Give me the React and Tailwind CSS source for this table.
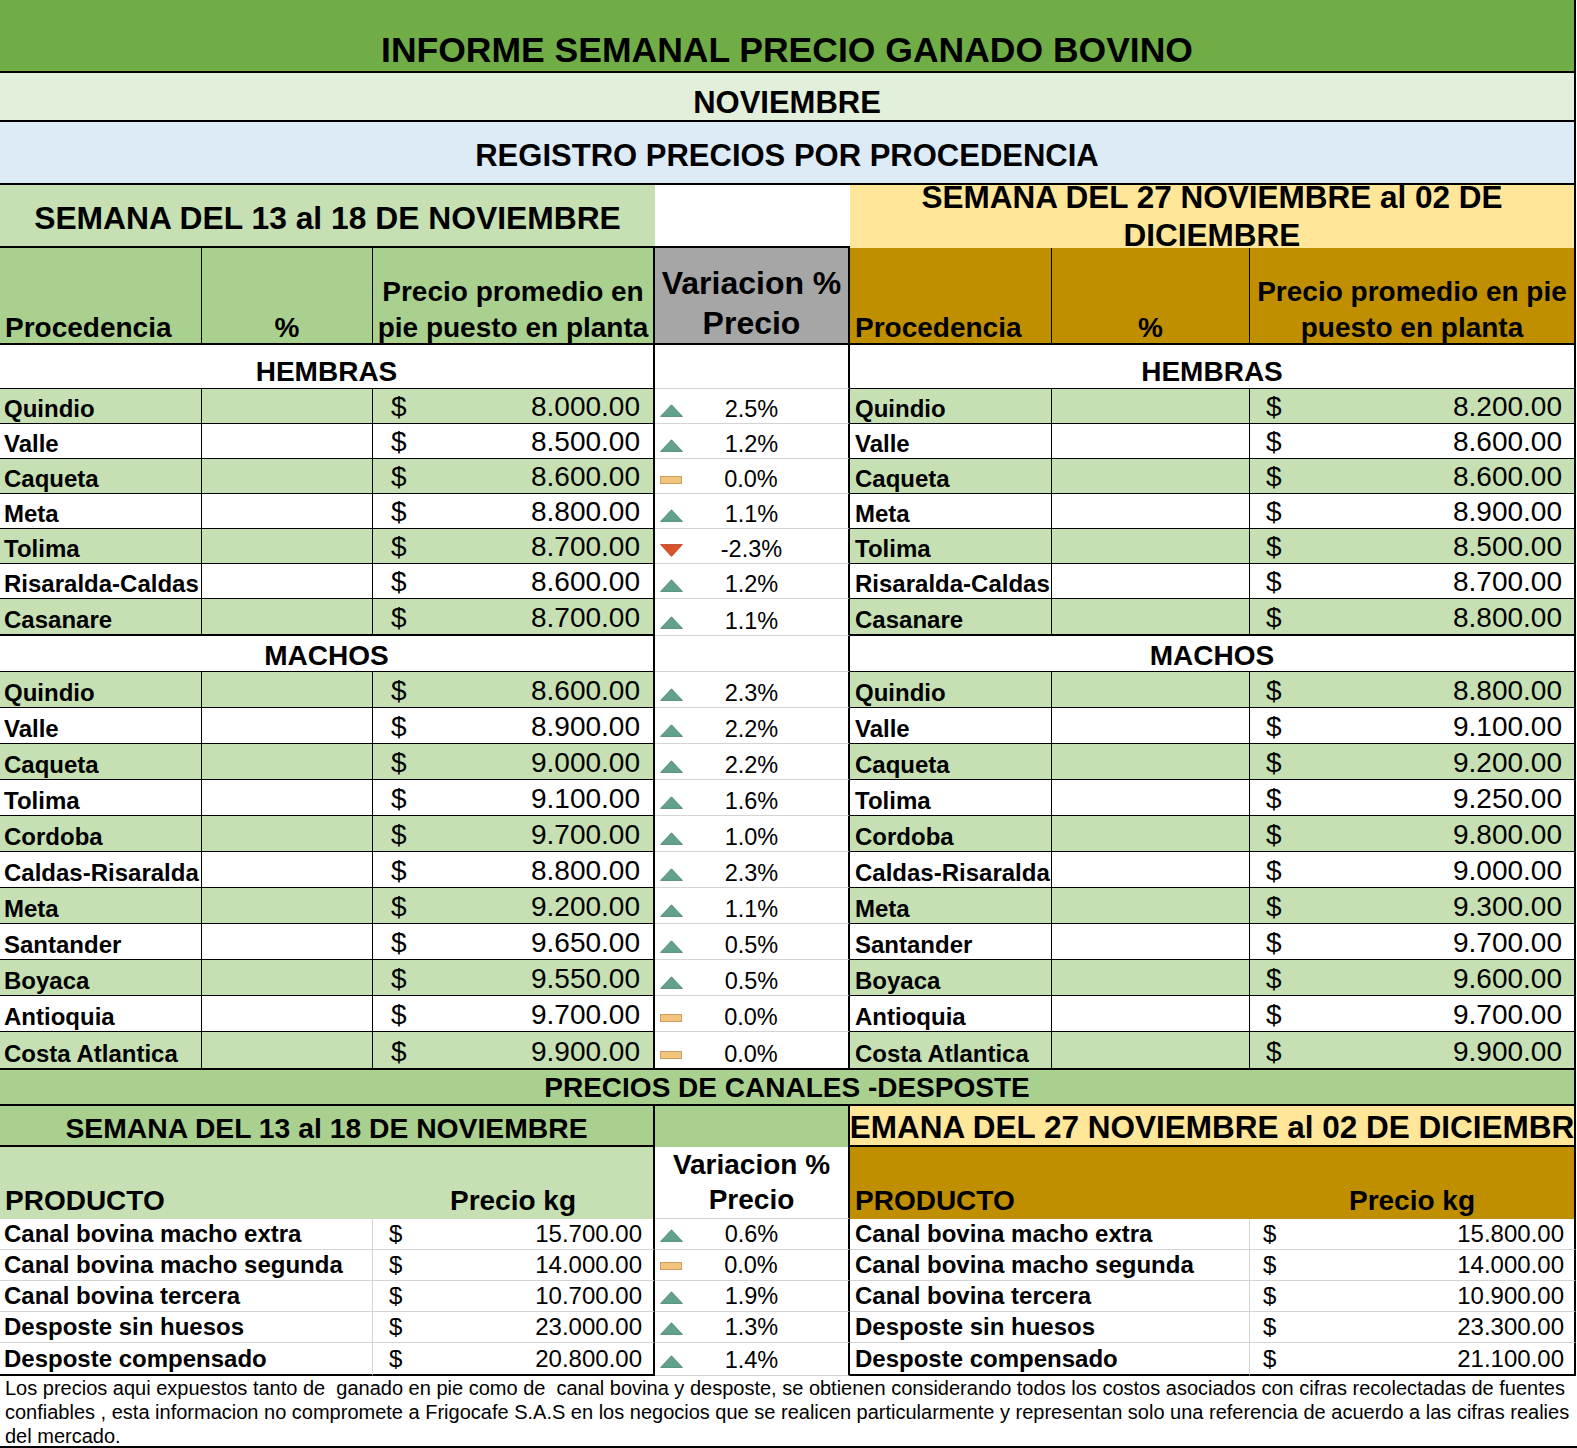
import React from "react";

const FONT = "font-['Liberation_Sans',Arial,Helvetica,sans-serif]";

const hembras = [
  ["Quindio", "8.000.00", "up", "2.5%", "8.200.00"],
  ["Valle", "8.500.00", "up", "1.2%", "8.600.00"],
  ["Caqueta", "8.600.00", "flat", "0.0%", "8.600.00"],
  ["Meta", "8.800.00", "up", "1.1%", "8.900.00"],
  ["Tolima", "8.700.00", "down", "-2.3%", "8.500.00"],
  ["Risaralda-Caldas", "8.600.00", "up", "1.2%", "8.700.00"],
  ["Casanare", "8.700.00", "up", "1.1%", "8.800.00"],
];

const machos = [
  ["Quindio", "8.600.00", "up", "2.3%", "8.800.00"],
  ["Valle", "8.900.00", "up", "2.2%", "9.100.00"],
  ["Caqueta", "9.000.00", "up", "2.2%", "9.200.00"],
  ["Tolima", "9.100.00", "up", "1.6%", "9.250.00"],
  ["Cordoba", "9.700.00", "up", "1.0%", "9.800.00"],
  ["Caldas-Risaralda", "8.800.00", "up", "2.3%", "9.000.00"],
  ["Meta", "9.200.00", "up", "1.1%", "9.300.00"],
  ["Santander", "9.650.00", "up", "0.5%", "9.700.00"],
  ["Boyaca", "9.550.00", "up", "0.5%", "9.600.00"],
  ["Antioquia", "9.700.00", "flat", "0.0%", "9.700.00"],
  ["Costa Atlantica", "9.900.00", "flat", "0.0%", "9.900.00"],
];

const productos = [
  ["Canal bovina macho extra", "15.700.00", "up", "0.6%", "15.800.00"],
  ["Canal bovina macho segunda", "14.000.00", "flat", "0.0%", "14.000.00"],
  ["Canal bovina tercera", "10.700.00", "up", "1.9%", "10.900.00"],
  ["Desposte sin huesos", "23.000.00", "up", "1.3%", "23.300.00"],
  ["Desposte compensado", "20.800.00", "up", "1.4%", "21.100.00"],
];

function Trend({ dir }) {
  if (dir === "up")
    return (
      <svg className="shrink-0 mb-[4px]" width="23" height="13" viewBox="0 0 23 13">
        <polygon points="0.6,12.4 11.5,0.8 22.4,12.4" fill="#62a28a" stroke="#437f6a" strokeWidth="0.8" />
      </svg>
    );
  if (dir === "down")
    return (
      <svg className="shrink-0 mb-[4px]" width="23" height="13" viewBox="0 0 23 13">
        <polygon points="0.6,0.6 22.4,0.6 11.5,12.4" fill="#d8532c" stroke="#b03e1c" strokeWidth="0.8" />
      </svg>
    );
  return (
    <svg className="shrink-0 mb-[7px]" width="22" height="8" viewBox="0 0 22 8">
      <rect x="0.5" y="0.5" width="21" height="7" fill="#f3c47b" stroke="#c9a061" strokeWidth="1" />
    </svg>
  );
}

function VarCell({ dir, pct, bottom }) {
  return (
    <div className={"w-[195px] shrink-0 bg-white border-r-2 border-r-black flex items-end pb-[2px] " + bottom}>
      <div className="ml-[5px] flex items-end">
        <Trend dir={dir} />
      </div>
      <span className="flex-1 text-center text-[23.5px] leading-[24px] mr-[28px]">{pct}</span>
    </div>
  );
}

function DataRow({ r, green, h, last, midBottom }) {
  const bg = green ? "bg-[#c6e0b4]" : "bg-white";
  const bb = last ? "border-b-2 border-b-black" : "border-b border-b-black";
  return (
    <div className={"flex " + h}>
      <div className={"w-[202px] shrink-0 border-r border-r-black flex items-end pl-[4px] pb-[2px] " + bg + " " + bb}>
        <span className="font-bold text-[24px] leading-[24px] whitespace-nowrap">{r[0]}</span>
      </div>
      <div className={"w-[171px] shrink-0 border-r border-r-black " + bg + " " + bb}></div>
      <div className={"w-[282px] shrink-0 border-r-2 border-r-black flex items-end justify-between pl-[18px] pr-[13px] pb-[2px] text-[28px] leading-[28px] " + bg + " " + bb}>
        <span>$</span>
        <span>{r[1]}</span>
      </div>
      <VarCell dir={r[2]} pct={r[3]} bottom={midBottom} />
      <div className={"w-[202px] shrink-0 border-r border-r-black flex items-end pl-[5px] pb-[2px] " + bg + " " + bb}>
        <span className="font-bold text-[24px] leading-[24px] whitespace-nowrap">{r[0]}</span>
      </div>
      <div className={"w-[198px] shrink-0 border-r border-r-black " + bg + " " + bb}></div>
      <div className={"w-[326px] shrink-0 border-r-2 border-r-black flex items-end justify-between pl-[16px] pr-[12px] pb-[2px] text-[28px] leading-[28px] " + bg + " " + bb}>
        <span>$</span>
        <span>{r[4]}</span>
      </div>
    </div>
  );
}

function SectionRow({ label, h, pb }) {
  return (
    <div className={"flex " + h}>
      <div className={"w-[655px] shrink-0 bg-white border-r-2 border-r-black border-b border-b-black flex items-end justify-center " + pb}>
        <span className="font-bold text-[28px] leading-[28px]">{label}</span>
      </div>
      <div className="w-[195px] shrink-0 bg-white border-r-2 border-r-black border-b border-b-[#d4d4d4]"></div>
      <div className={"w-[726px] shrink-0 bg-white border-r-2 border-r-black border-b border-b-black flex items-end justify-center " + pb}>
        <span className="font-bold text-[28px] leading-[28px]">{label}</span>
      </div>
    </div>
  );
}

function ProductRow({ r, last }) {
  const bb = last ? "border-b-2 border-b-black" : "border-b border-b-[#d4d4d4]";
  return (
    <div className={"flex " + (last ? "h-[33px]" : "h-[31px]")}>
      <div className={"w-[373px] shrink-0 bg-white border-r border-r-[#d4d4d4] flex items-end pl-[4px] pb-[3px] " + bb}>
        <span className="font-bold text-[24px] leading-[24px] whitespace-nowrap">{r[0]}</span>
      </div>
      <div className={"w-[282px] shrink-0 bg-white border-r-2 border-r-black flex items-end justify-between pl-[16px] pr-[11px] pb-[3px] text-[24px] leading-[24px] " + bb}>
        <span>$</span>
        <span>{r[1]}</span>
      </div>
      <div className="w-[195px] shrink-0 bg-white border-r-2 border-r-black border-b border-b-[#d4d4d4] flex items-end pb-[3px]">
        <div className="ml-[5px] flex items-end">
          <Trend dir={r[2]} />
        </div>
        <span className="flex-1 text-center text-[23.5px] leading-[24px] mr-[28px]">{r[3]}</span>
      </div>
      <div className={"w-[400px] shrink-0 bg-white border-r border-r-[#d4d4d4] flex items-end pl-[5px] pb-[3px] " + bb}>
        <span className="font-bold text-[24px] leading-[24px] whitespace-nowrap">{r[0]}</span>
      </div>
      <div className={"w-[326px] shrink-0 bg-white border-r-2 border-r-black flex items-end justify-between pl-[13px] pr-[10px] pb-[3px] text-[24px] leading-[24px] " + bb}>
        <span>$</span>
        <span>{r[4]}</span>
      </div>
    </div>
  );
}

export default function App() {
  return (
    <div className={"w-[1577px] h-[1448px] bg-white text-black overflow-hidden " + FONT}>
      {/* Title */}
      <div className="w-[1576px] h-[73px] bg-[#70ad47] border-b-2 border-r-2 border-black flex items-end justify-center pb-[3px]">
        <span className="font-bold text-[35.5px] leading-[36px] whitespace-nowrap">INFORME SEMANAL PRECIO GANADO BOVINO</span>
      </div>
      {/* Month */}
      <div className="w-[1576px] h-[49px] bg-[#e2efda] border-b-2 border-r-2 border-black flex items-end justify-center pb-[2px]">
        <span className="font-bold text-[31px] leading-[31px]">NOVIEMBRE</span>
      </div>
      {/* Registro */}
      <div className="w-[1576px] h-[63px] bg-[#ddebf7] border-b-2 border-r-2 border-black flex items-end justify-center pb-[12px]">
        <span className="font-bold text-[31px] leading-[31px] whitespace-nowrap">REGISTRO PRECIOS POR PROCEDENCIA</span>
      </div>
      {/* Semana row */}
      <div className="flex h-[63px]">
        <div className="w-[655px] shrink-0 bg-[#c6e0b4] border-b-2 border-black flex items-end justify-center pb-[12px]">
          <span className="font-bold text-[31.8px] leading-[32px] whitespace-nowrap">SEMANA DEL 13 al 18 DE NOVIEMBRE</span>
        </div>
        <div className="w-[195px] shrink-0 bg-white border-b-2 border-black"></div>
        <div className="w-[726px] shrink-0 bg-[#ffe699] border-r-2 border-black overflow-hidden flex items-center justify-center">
          <span className="font-bold text-[31.5px] leading-[38px] text-center shrink-0 w-[726px] px-[8px] mt-[-2px]">
            SEMANA DEL 27 NOVIEMBRE al 02 DE DICIEMBRE
          </span>
        </div>
      </div>
      {/* Header */}
      <div className="flex h-[97px]">
        <div className="w-[202px] shrink-0 bg-[#a9d08e] border-r border-b-2 border-black flex items-end pl-[5px]">
          <span className="font-bold text-[28px] leading-[30px]">Procedencia</span>
        </div>
        <div className="w-[171px] shrink-0 bg-[#a9d08e] border-r border-b-2 border-black flex items-end justify-center">
          <span className="font-bold text-[28px] leading-[30px]">%</span>
        </div>
        <div className="w-[282px] shrink-0 bg-[#a9d08e] border-r-2 border-b-2 border-black flex items-end justify-center px-[2px]">
          <span className="font-bold text-[28px] leading-[36px] text-center -mb-[3px]">Precio promedio en pie puesto en planta</span>
        </div>
        <div className="w-[195px] shrink-0 bg-[#a6a6a6] border-r-2 border-b-2 border-black flex items-end justify-center">
          <span className="font-bold text-[32px] leading-[40px] text-center">
            Variacion %<br />Precio
          </span>
        </div>
        <div className="w-[202px] shrink-0 bg-[#bf8f00] border-r border-b-2 border-black flex items-end pl-[5px]">
          <span className="font-bold text-[28px] leading-[30px]">Procedencia</span>
        </div>
        <div className="w-[198px] shrink-0 bg-[#bf8f00] border-r border-b-2 border-black flex items-end justify-center">
          <span className="font-bold text-[28px] leading-[30px]">%</span>
        </div>
        <div className="w-[326px] shrink-0 bg-[#bf8f00] border-r-2 border-b-2 border-black flex items-end justify-center px-[2px]">
          <span className="font-bold text-[28px] leading-[36px] text-center -mb-[3px]">Precio promedio en pie puesto en planta</span>
        </div>
      </div>

      {/* Hembras */}
      <SectionRow label="HEMBRAS" h="h-[44px]" pb="pb-[2px]" />
      {hembras.map((r, i) => (
        <DataRow
          key={"h" + i}
          r={r}
          green={i % 2 === 0}
          h={i === hembras.length - 1 ? "h-[37px]" : "h-[35px]"}
          last={i === hembras.length - 1}
          midBottom="border-b border-b-[#d4d4d4]"
        />
      ))}

      {/* Machos */}
      <SectionRow label="MACHOS" h="h-[36px]" pb="pb-[1px]" />
      {machos.map((r, i) => (
        <DataRow
          key={"m" + i}
          r={r}
          green={i % 2 === 0}
          h={i === machos.length - 1 ? "h-[38px]" : "h-[36px]"}
          last={i === machos.length - 1}
          midBottom={i === machos.length - 1 ? "border-b-2 border-b-black" : "border-b border-b-[#d4d4d4]"}
        />
      ))}

      {/* Canales */}
      <div className="w-[1576px] h-[36px] bg-[#a9d08e] border-b-2 border-r-2 border-black flex items-end justify-center pb-[2px]">
        <span className="font-bold text-[28px] leading-[28px] whitespace-nowrap">PRECIOS DE CANALES -DESPOSTE</span>
      </div>
      <div className="flex h-[41px]">
        <div className="w-[655px] shrink-0 bg-[#a9d08e] border-r-2 border-b-2 border-black flex items-end justify-center pb-[3px]">
          <span className="font-bold text-[28.3px] leading-[28px] whitespace-nowrap">SEMANA DEL 13 al 18 DE NOVIEMBRE</span>
        </div>
        <div className="w-[195px] shrink-0 bg-[#a9d08e] border-r-2 border-black"></div>
        <div className="w-[726px] shrink-0 bg-[#ffe699] border-r-2 border-b-2 border-black overflow-hidden flex items-end justify-center pb-[2px]">
          <span className="font-bold text-[31.5px] leading-[32px] whitespace-nowrap shrink-0">SEMANA DEL 27 NOVIEMBRE al 02 DE DICIEMBRE</span>
        </div>
      </div>
      <div className="flex h-[72px]">
        <div className="w-[373px] shrink-0 bg-[#c6e0b4] flex items-end pl-[5px] pb-[3px]">
          <span className="font-bold text-[28px] leading-[30px]">PRODUCTO</span>
        </div>
        <div className="w-[282px] shrink-0 bg-[#c6e0b4] border-r-2 border-black flex items-end justify-center pb-[3px]">
          <span className="font-bold text-[28px] leading-[30px]">Precio kg</span>
        </div>
        <div className="w-[195px] shrink-0 bg-white border-r-2 border-black border-b border-b-[#d4d4d4] flex items-end justify-center pb-[1px]">
          <span className="font-bold text-[28px] leading-[35px] text-center">
            Variacion %<br />Precio
          </span>
        </div>
        <div className="w-[400px] shrink-0 bg-[#bf8f00] flex items-end pl-[5px] pb-[3px]">
          <span className="font-bold text-[28px] leading-[30px]">PRODUCTO</span>
        </div>
        <div className="w-[326px] shrink-0 bg-[#bf8f00] border-r-2 border-black flex items-end justify-center pb-[3px]">
          <span className="font-bold text-[28px] leading-[30px]">Precio kg</span>
        </div>
      </div>
      {productos.map((r, i) => (
        <ProductRow key={"p" + i} r={r} last={i === productos.length - 1} />
      ))}

      {/* Footer */}
      <div className="w-[1577px] h-[72px] border-b-2 border-black pl-[5px] text-[20px] leading-[24px] whitespace-pre">
        <div>Los precios aqui expuestos tanto de  ganado en pie como de  canal bovina y desposte, se obtienen considerando todos los costos asociados con cifras recolectadas de fuentes</div>
        <div>confiables , esta informacion no compromete a Frigocafe S.A.S en los negocios que se realicen particularmente y representan solo una referencia de acuerdo a las cifras realies</div>
        <div>del mercado.</div>
      </div>
    </div>
  );
}
